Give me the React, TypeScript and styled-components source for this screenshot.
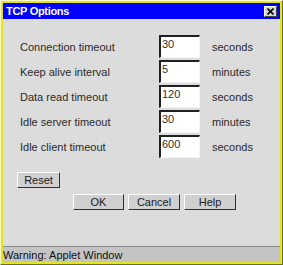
import { Fragment } from 'react';
import styled, { createGlobalStyle } from 'styled-components';

const Global = createGlobalStyle`
  html, body { margin: 0; padding: 0; background: #ffffff; }
  body { font-family: "Liberation Sans", Arial, sans-serif; }
  * { box-sizing: border-box; }
`;

const Frame = styled.div`
  width: 283px;
  height: 265px;
  border: 1px solid;
  border-color: #fbfbc8 #6f6f20 #6f6f20 #fbfbc8;
  background: #e4e41c;
  padding: 2px;
  display: flex;
  flex-direction: column;
`;

const TitleBar = styled.div`
  height: 16px;
  background: #0000ff;
  display: flex;
  align-items: center;
  justify-content: space-between;
  padding: 0 3px 0 3px;
`;

const Title = styled.span`
  color: #ffffff;
  font-weight: bold;
  font-size: 11px;
  letter-spacing: -0.3px;
`;

const CloseButton = styled.div`
  width: 13px;
  height: 11px;
  background: #d4d4d4;
  border: 1px solid;
  border-color: #ffffff #404040 #404040 #ffffff;
  display: flex;
  align-items: center;
  justify-content: center;
`;

const Body = styled.div`
  flex: 1;
  background: #dcdcdc;
  display: flex;
  flex-direction: column;
  padding: 16px 0 0 14px;
`;

const Grid = styled.div`
  display: grid;
  grid-template-columns: 130px 41px auto;
  column-gap: 12px;
  row-gap: 2px;
  align-items: center;
`;

const Label = styled.span`
  font-size: 11px;
  color: #2a2a2a;
  padding-left: 3px;
`;

const Field = styled.div`
  height: 23px;
  background: #ffffff;
  border-style: solid;
  border-width: 2px 1px 1px 2px;
  border-color: #202020 #f4f4f4 #f4f4f4 #202020;
  font-size: 11px;
  color: #303030;
  padding: 1px 0 0 1px;
`;

const Unit = styled.span`
  font-size: 11px;
  color: #2a2a2a;
`;

const Button = styled.div<{ $w: number }>`
  width: ${(p) => p.$w}px;
  height: 16px;
  background: #d0d0d0;
  border: 1px solid;
  border-color: #ffffff #303030 #303030 #ffffff;
  font-size: 11px;
  color: #202020;
  display: flex;
  align-items: center;
  justify-content: center;
`;

const ResetRow = styled.div`
  margin-top: 14px;
`;

const ButtonRow = styled.div`
  margin-top: 6px;
  display: flex;
  gap: 4px;
  padding-left: 56px;
`;

const Status = styled.div`
  height: 16px;
  background: #c4c4c4;
  border-top: 1px solid #8a8a8a;
  font-size: 11px;
  color: #101010;
  padding: 1px 0 0 0;
  display: flex;
  align-items: center;
`;

const rows = [
  ['Connection timeout', '30', 'seconds'],
  ['Keep alive interval', '5', 'minutes'],
  ['Data read timeout', '120', 'seconds'],
  ['Idle server timeout', '30', 'minutes'],
  ['Idle client timeout', '600', 'seconds'],
];

export default function App() {
  return (
    <>
      <Global />
      <Frame>
        <TitleBar>
          <Title>TCP Options</Title>
          <CloseButton>
            <svg width="7" height="7" viewBox="0 0 7 7">
              <path d="M0.5 0.5L6.5 6.5M6.5 0.5L0.5 6.5" stroke="#000" strokeWidth="1.6" />
            </svg>
          </CloseButton>
        </TitleBar>
        <Body>
          <Grid>
            {rows.map(([label, value, unit]) => (
              <Fragment key={label}>
                <Label>{label}</Label>
                <Field>{value}</Field>
                <Unit>{unit}</Unit>
              </Fragment>
            ))}
          </Grid>
          <ResetRow>
            <Button $w={43}>Reset</Button>
          </ResetRow>
          <ButtonRow>
            <Button $w={51}>OK</Button>
            <Button $w={52}>Cancel</Button>
            <Button $w={52}>Help</Button>
          </ButtonRow>
        </Body>
        <Status>Warning: Applet Window</Status>
      </Frame>
    </>
  );
}
